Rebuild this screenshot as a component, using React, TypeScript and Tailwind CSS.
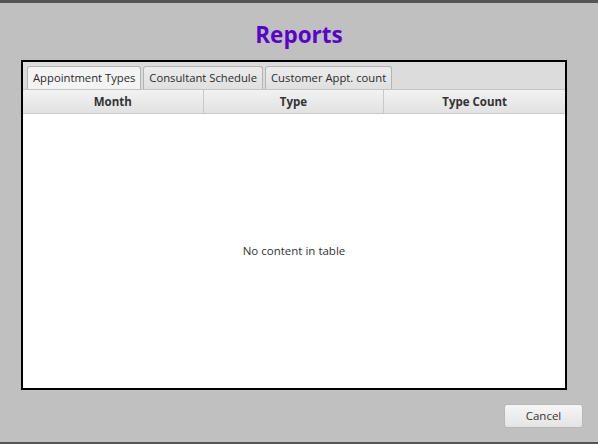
const FONT = "font-['Segoe_UI','Open_Sans','Noto_Sans',sans-serif]";

const TABS = ["Appointment Types", "Consultant Schedule", "Customer Appt. count"];
const COLUMNS = ["Month", "Type", "Type Count"];

export default function App() {
  return (
    <div className={`${FONT} w-[598px] h-[444px] bg-[#c0c0c0] border-t-[3px] border-b-[2px] border-[#555555] flex flex-col`}>
      <h1 className="mt-[16px] h-[32px] text-center text-[22.5px] leading-[32px] font-bold text-[#5706c8]">Reports</h1>

      <div className="mt-[9px] ml-[21px] w-[546px] h-[330px] border-2 border-black bg-white flex flex-col">
        {/* tab strip */}
        <div className="h-[28px] bg-[#dcdcdc] flex items-end gap-[2px] pl-[4px] border-b border-[#c4c4c4]">
          {TABS.map((t, i) => (
            <div
              key={t}
              className={`h-[23px] px-[5px] flex items-center text-[11.25px] text-[#2b2b2b] rounded-t-[3px] border border-b-0 border-[#b4b4b4] ${
                i === 0 ? "bg-[#f4f4f4]" : "bg-gradient-to-b from-[#ececec] to-[#e0e0e0]"
              }`}
            >
              {t}
            </div>
          ))}
        </div>

        {/* column headers */}
        <div className="h-[24px] grid grid-cols-3 bg-gradient-to-b from-[#f2f2f2] to-[#e2e2e2] border-b border-[#c8c8c8]">
          {COLUMNS.map((c, i) => (
            <div
              key={c}
              className={`flex items-center justify-center text-[11.5px] font-bold text-[#333333] ${
                i < 2 ? "border-r border-[#c8c8c8]" : ""
              }`}
            >
              {c}
            </div>
          ))}
        </div>

        <div className="flex-1 flex items-center justify-center text-[11.5px] text-[#333333]">
          No content in table
        </div>
      </div>

      <div className="mt-[14px] flex justify-end pr-[15px]">
        <button className="w-[79px] h-[24px] rounded-[3px] border border-[#b8b8b8] bg-gradient-to-b from-[#f6f6f6] to-[#e4e4e4] text-[11.5px] text-[#333333]">
          Cancel
        </button>
      </div>
    </div>
  );
}
